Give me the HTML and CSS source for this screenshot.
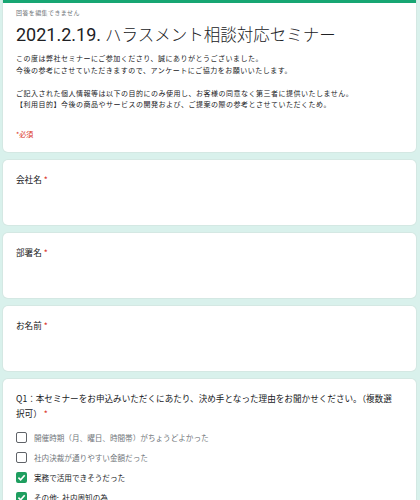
FILE: index.html
```html
<!DOCTYPE html>
<html lang="ja">
  <head>
    <meta charset="UTF-8" />
    <meta name="viewport" content="width=device-width, initial-scale=1.0" />
    <title>2021.2.19. ハラスメント相談対応セミナー</title>
    <link rel="stylesheet" href="styles.css">
  </head>
  <body>
    <main class="form">
      <section class="card intro">
        <p class="note">回答を編集できません</p>
        <h1><span class="date">2021.2.19.</span> ハラスメント相談対応セミナー</h1>
        <p class="desc">この度は弊社セミナーにご参加くださり、誠にありがとうございました。<br>今後の参考にさせていただきますので、アンケートにご協力をお願いいたします。<br><br>ご記入された個人情報等は以下の目的にのみ使用し、お客様の同意なく第三者に提供いたしません。<br>【利用目的】今後の商品やサービスの開発および、ご提案の際の参考とさせていただくため。</p>
        <p class="required">*必須</p>
      </section>

      <section class="card question">
        <h2>会社名 <span class="star">*</span></h2>
      </section>

      <section class="card question">
        <h2>部署名 <span class="star">*</span></h2>
      </section>

      <section class="card question">
        <h2>お名前 <span class="star">*</span></h2>
      </section>

      <section class="card question">
        <h2>Q1：本セミナーをお申込みいただくにあたり、決め手となった理由をお聞かせください。（複数選<br>択可） <span class="star">*</span></h2>
        <ul class="options">
          <li><span class="box"></span>開催時期（月、曜日、時間帯）がちょうどよかった</li>
          <li><span class="box"></span>社内決裁が通りやすい金額だった</li>
          <li class="checked"><span class="box"><svg viewBox="0 0 10 10"><path d="M2.2 5.2 L4.2 7.1 L7.9 3" /></svg></span>実務で活用できそうだった</li>
          <li class="checked"><span class="box"><svg viewBox="0 0 10 10"><path d="M2.2 5.2 L4.2 7.1 L7.9 3" /></svg></span>その他:&nbsp;&nbsp;社内周知の為</li>
        </ul>
      </section>
    </main>
  </body>
</html>
```

FILE: styles.css
```css
body {
  margin: 0;
  background-color: #d9f1ec;
  font-family: "Noto Sans CJK JP", Roboto, sans-serif;
  color: #202124;
}

.form {
  display: flex;
  flex-direction: column;
  gap: 8px;
  padding: 0 4px 20px 3px;
}

.card {
  background-color: #fff;
  border-radius: 5px;
  box-shadow: 0 0 0 1px #d4e8e3;
  padding: 0 13px;
}

.intro {
  border-top: 3px solid #17a673;
  border-radius: 0 0 5px 5px;
  padding-top: 5px;
  padding-bottom: 13px;
  height: 131px;
}

.note {
  margin: 0;
  font-size: 6px;
  letter-spacing: 0.4px;
  line-height: 10px;
  color: #70757a;
}

h1 {
  margin: 5px 0 0 0;
  font-family: Roboto, "Noto Sans CJK JP", sans-serif;
  font-weight: 300;
  font-size: 16.5px;
  line-height: 24px;
}

.date {
  font-size: 18px;
  font-weight: 400;
}

.desc {
  margin: 5px 0 0 0;
  font-size: 7px;
  letter-spacing: 0.5px;
  line-height: 11.5px;
}

.required {
  margin: 18px 0 0 0;
  font-size: 7px;
  line-height: 11px;
  color: #d93025;
}

.question {
  padding-top: 12px;
  min-height: 53px;
}

h2 {
  margin: 0;
  font-weight: 400;
  font-size: 8.6px;
  line-height: 15px;
}

.star {
  color: #d93025;
}

.options {
  list-style: none;
  margin: 6px 0 0 0;
  padding: 0;
}

.options li {
  display: flex;
  align-items: center;
  gap: 7px;
  height: 20px;
  font-size: 7.6px;
  color: #70757a;
}

.box {
  box-sizing: border-box;
  width: 11px;
  height: 11px;
  border: 1.5px solid #5f6368;
  border-radius: 2px;
  flex-shrink: 0;
}

.options .checked {
  color: #202124;
}

.checked .box {
  border: none;
  background-color: #1e9e5f;
}

.box svg {
  display: block;
  width: 11px;
  height: 11px;
}

.box path {
  fill: none;
  stroke: #fff;
  stroke-width: 1.5;
}
```
